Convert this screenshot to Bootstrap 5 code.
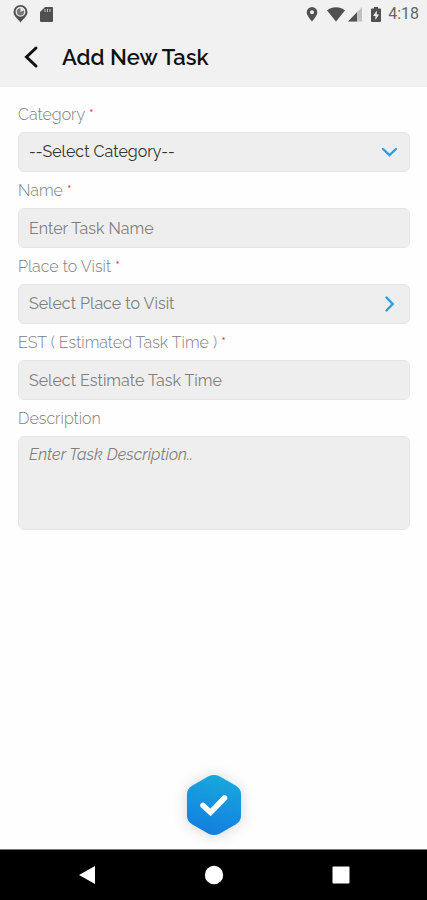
<!DOCTYPE html>
<html lang="en">
<head>
<meta charset="utf-8">
<meta name="viewport" content="width=device-width, initial-scale=1">
<title>Add New Task</title>
<link href="https://cdn.jsdelivr.net/npm/bootstrap@5.3.0/dist/css/bootstrap.min.css" rel="stylesheet">
<style>
  body { font-family: Raleway, Lato, "Open Sans", sans-serif; background: #fefefe; }
  .top-area { background: #f1f1f1; }
  .status-row { height: 28px; padding: 0 8px 0 12px; color: #505050; }
  .status-row svg, .sys-nav svg { display: block; }
  .clock { font: 16px/20px Roboto, sans-serif; color: #666; }
  .app-row { height: 59px; padding: 0 18px 2px; gap: 16px; }
  .app-row h1 { font-size: 22px; line-height: 28px; font-weight: 600; color: #111; }
  .task-form { padding: 16px 17px 13px 18px; }
  .field-group { margin-bottom: 7px; }
  .field-label { font-size: 16px; line-height: 24px; margin-bottom: 5px; font-weight: 300; color: #808080; display: block; }
  .req { color: #f4483c; font-size: 14px; line-height: 1; font-weight: 500; }
  .field-box, .field-box:focus { height: 40px; padding: 0 10px; font-size: 16px; line-height: 24px; font-weight: 400; background-color: #eee; border: 1px solid #e6e6e6; border-radius: 6px; color: #808080; }
  .field-box::placeholder { color: #808080; opacity: 1; }
  select.field-box, select.field-box:focus { color: #333; background-image: none; }
  .field-area, .field-area:focus { height: 94px; padding: 6px 10px; resize: none; font-style: italic; }
  .chev { right: 11px; pointer-events: none; }
  .save-btn { filter: drop-shadow(0 1px 7px rgba(0, 0, 0, .16)); }
  .sys-nav { height: 51px; background: #000; border-top: 1px solid #777; padding: 0 23px; }
</style>
<script src="https://cdn.jsdelivr.net/npm/bootstrap@5.3.0/dist/js/bootstrap.bundle.min.js" defer></script>
</head>
<body class="min-vh-100 d-flex flex-column">
<header class="top-area">
  <div class="status-row d-flex align-items-center justify-content-between">
    <div class="d-flex align-items-center gap-2">
      <svg width="17" height="20" viewBox="0 0 17 20" aria-hidden="true"><path fill="#505050" d="M8.500 1A7 7 0 0 0 1.500 8c0 4 4 6.500 7 10.500 3-4 7-6.500 7-10.500a7 7 0 0 0-7-7z"/><circle cx="8.500" cy="7.800" r="4.300" fill="#777" stroke="#e8e8e8" stroke-width="1.300"/><path d="M8.500 8V3.500A4.300 4.300 0 0 1 12.500 6z" fill="#e8e8e8"/></svg>
      <svg width="18" height="18" viewBox="0 0 18 18" aria-hidden="true"><path fill="#505050" d="M8 2h7a1 1 0 0 1 1 1v13a1 1 0 0 1-1 1H4a1 1 0 0 1-1-1V7z"/><path d="M8 4v3M10.500 4v3M13 4v3" stroke="#c8c8c8"/></svg>
    </div>
    <div class="d-flex align-items-center gap-1">
      <svg class="me-1" width="14" height="18" viewBox="0 0 14 18" aria-hidden="true"><path fill="#505050" fill-rule="evenodd" d="M8 2a5.300 5.300 0 0 0-5.300 5.300C2.700 11 8 16.500 8 16.500s5.300-5.500 5.300-9.200A5.300 5.300 0 0 0 8 2zm0 3.300a2 2 0 1 1 0 4 2 2 0 0 1 0-4z"/></svg>
      <div class="d-flex align-items-center">
        <svg width="20" height="18" viewBox="0 0 20 18" aria-hidden="true"><path fill="#505050" d="M1 5.500C6 1.200 14 1.200 19 5.500L10 16.500z"/></svg>
        <svg width="18" height="18" viewBox="0 0 18 18" aria-hidden="true"><path fill="#c2c2c2" d="M16 2v14.500H2z"/><path fill="#505050" d="M11 7.200v9.300H2z"/></svg>
      </div>
      <svg width="16" height="18" viewBox="0 0 16 18" aria-hidden="true"><path fill="#505050" d="M6 2h4v1.500h2a1 1 0 0 1 1 1V16a1 1 0 0 1-1 1H4a1 1 0 0 1-1-1V4.500a1 1 0 0 1 1-1h2z"/><path fill="#eee" d="M8.800 5.500L5 11h2.400v4L11 9.500H8.800z"/></svg>
      <span class="clock">4:18</span>
    </div>
  </div>
  <div class="app-row d-flex align-items-center">
    <button type="button" class="btn p-0 border-0" aria-label="Back"><svg class="d-block" width="28" height="28" viewBox="0 0 28 28"><path d="M18 5L8.500 14l9.500 9" fill="none" stroke="#111" stroke-width="3" stroke-linecap="round" stroke-linejoin="miter"/></svg></button>
    <h1 class="m-0">Add New Task</h1>
  </div>
</header>
<main class="flex-grow-1 d-flex flex-column">
  <form class="task-form flex-grow-1 d-flex flex-column">
    <div class="field-group">
      <label class="field-label" for="category">Category <span class="req">*</span></label>
      <div class="position-relative d-flex align-items-center">
        <select id="category" class="form-select field-box"><option>--Select Category--</option></select>
        <svg class="chev position-absolute" width="18" height="18" viewBox="0 0 18 18" aria-hidden="true"><path d="M2 6L8.500 12.200 15 6" fill="none" stroke="#2a9fe0" stroke-width="2.400" stroke-linecap="round"/></svg>
      </div>
    </div>
    <div class="field-group">
      <label class="field-label" for="name">Name <span class="req">*</span></label>
      <input id="name" type="text" class="form-control field-box" placeholder="Enter Task Name">
    </div>
    <div class="field-group">
      <label class="field-label" for="place">Place to Visit <span class="req">*</span></label>
      <button id="place" type="button" class="btn field-box w-100 d-flex align-items-center justify-content-between text-start position-relative">Select Place to Visit
        <svg class="chev position-absolute" width="18" height="18" viewBox="0 0 18 18" aria-hidden="true"><path d="M6.500 2.500L12.700 9 6.500 15.500" fill="none" stroke="#2a9fe0" stroke-width="2.400" stroke-linecap="round"/></svg>
      </button>
    </div>
    <div class="field-group">
      <label class="field-label" for="estimate">EST ( Estimated Task Time ) <span class="req">*</span></label>
      <input id="estimate" type="text" class="form-control field-box" placeholder="Select Estimate Task Time">
    </div>
    <div class="field-group">
      <label class="field-label" for="description">Description</label>
      <textarea id="description" class="form-control field-box field-area" placeholder="Enter Task Description.."></textarea>
    </div>
    <button type="submit" class="save-btn btn p-0 border-0 mt-auto mx-auto" aria-label="Save task">
      <svg class="d-block" width="56" height="62" viewBox="0 0 56 62"><defs><linearGradient id="blue" x1="0.600" y1="0" x2="0.400" y2="1"><stop offset="0" stop-color="#18a8dc"/><stop offset="1" stop-color="#147de0"/></linearGradient></defs><path fill="url(#blue)" d="M22.500 2.300Q28-.3 33.500 2.300L50 11.800Q55 15 55 20V42Q55 47 50 50.200L33.500 59.700Q28 62.300 22.500 59.700L6 50.200Q1 47 1 42V20Q1 15 6 11.800Z"/><path d="M17 31.500l7.500 7L38.500 24" fill="none" stroke="#fff" stroke-width="5.500" stroke-linecap="round" stroke-linejoin="miter"/></svg>
    </button>
  </form>
</main>
<nav class="sys-nav d-flex align-items-center" aria-label="System">
  <div class="row g-0 w-100">
    <div class="col d-flex justify-content-center"><button type="button" class="btn p-0 border-0" aria-label="Back"><svg width="20" height="20" viewBox="0 0 20 20"><path fill="#fff" d="M18 1v18L2 10z"/></svg></button></div>
    <div class="col d-flex justify-content-center"><button type="button" class="btn p-0 border-0" aria-label="Home"><svg width="20" height="20" viewBox="0 0 20 20"><circle cx="10" cy="10" r="9.200" fill="#fff"/></svg></button></div>
    <div class="col d-flex justify-content-center"><button type="button" class="btn p-0 border-0" aria-label="Recent apps"><svg width="20" height="20" viewBox="0 0 20 20"><rect x="1.500" y="1.500" width="17" height="17" rx="1" fill="#fff"/></svg></button></div>
  </div>
</nav>
</body>
</html>
